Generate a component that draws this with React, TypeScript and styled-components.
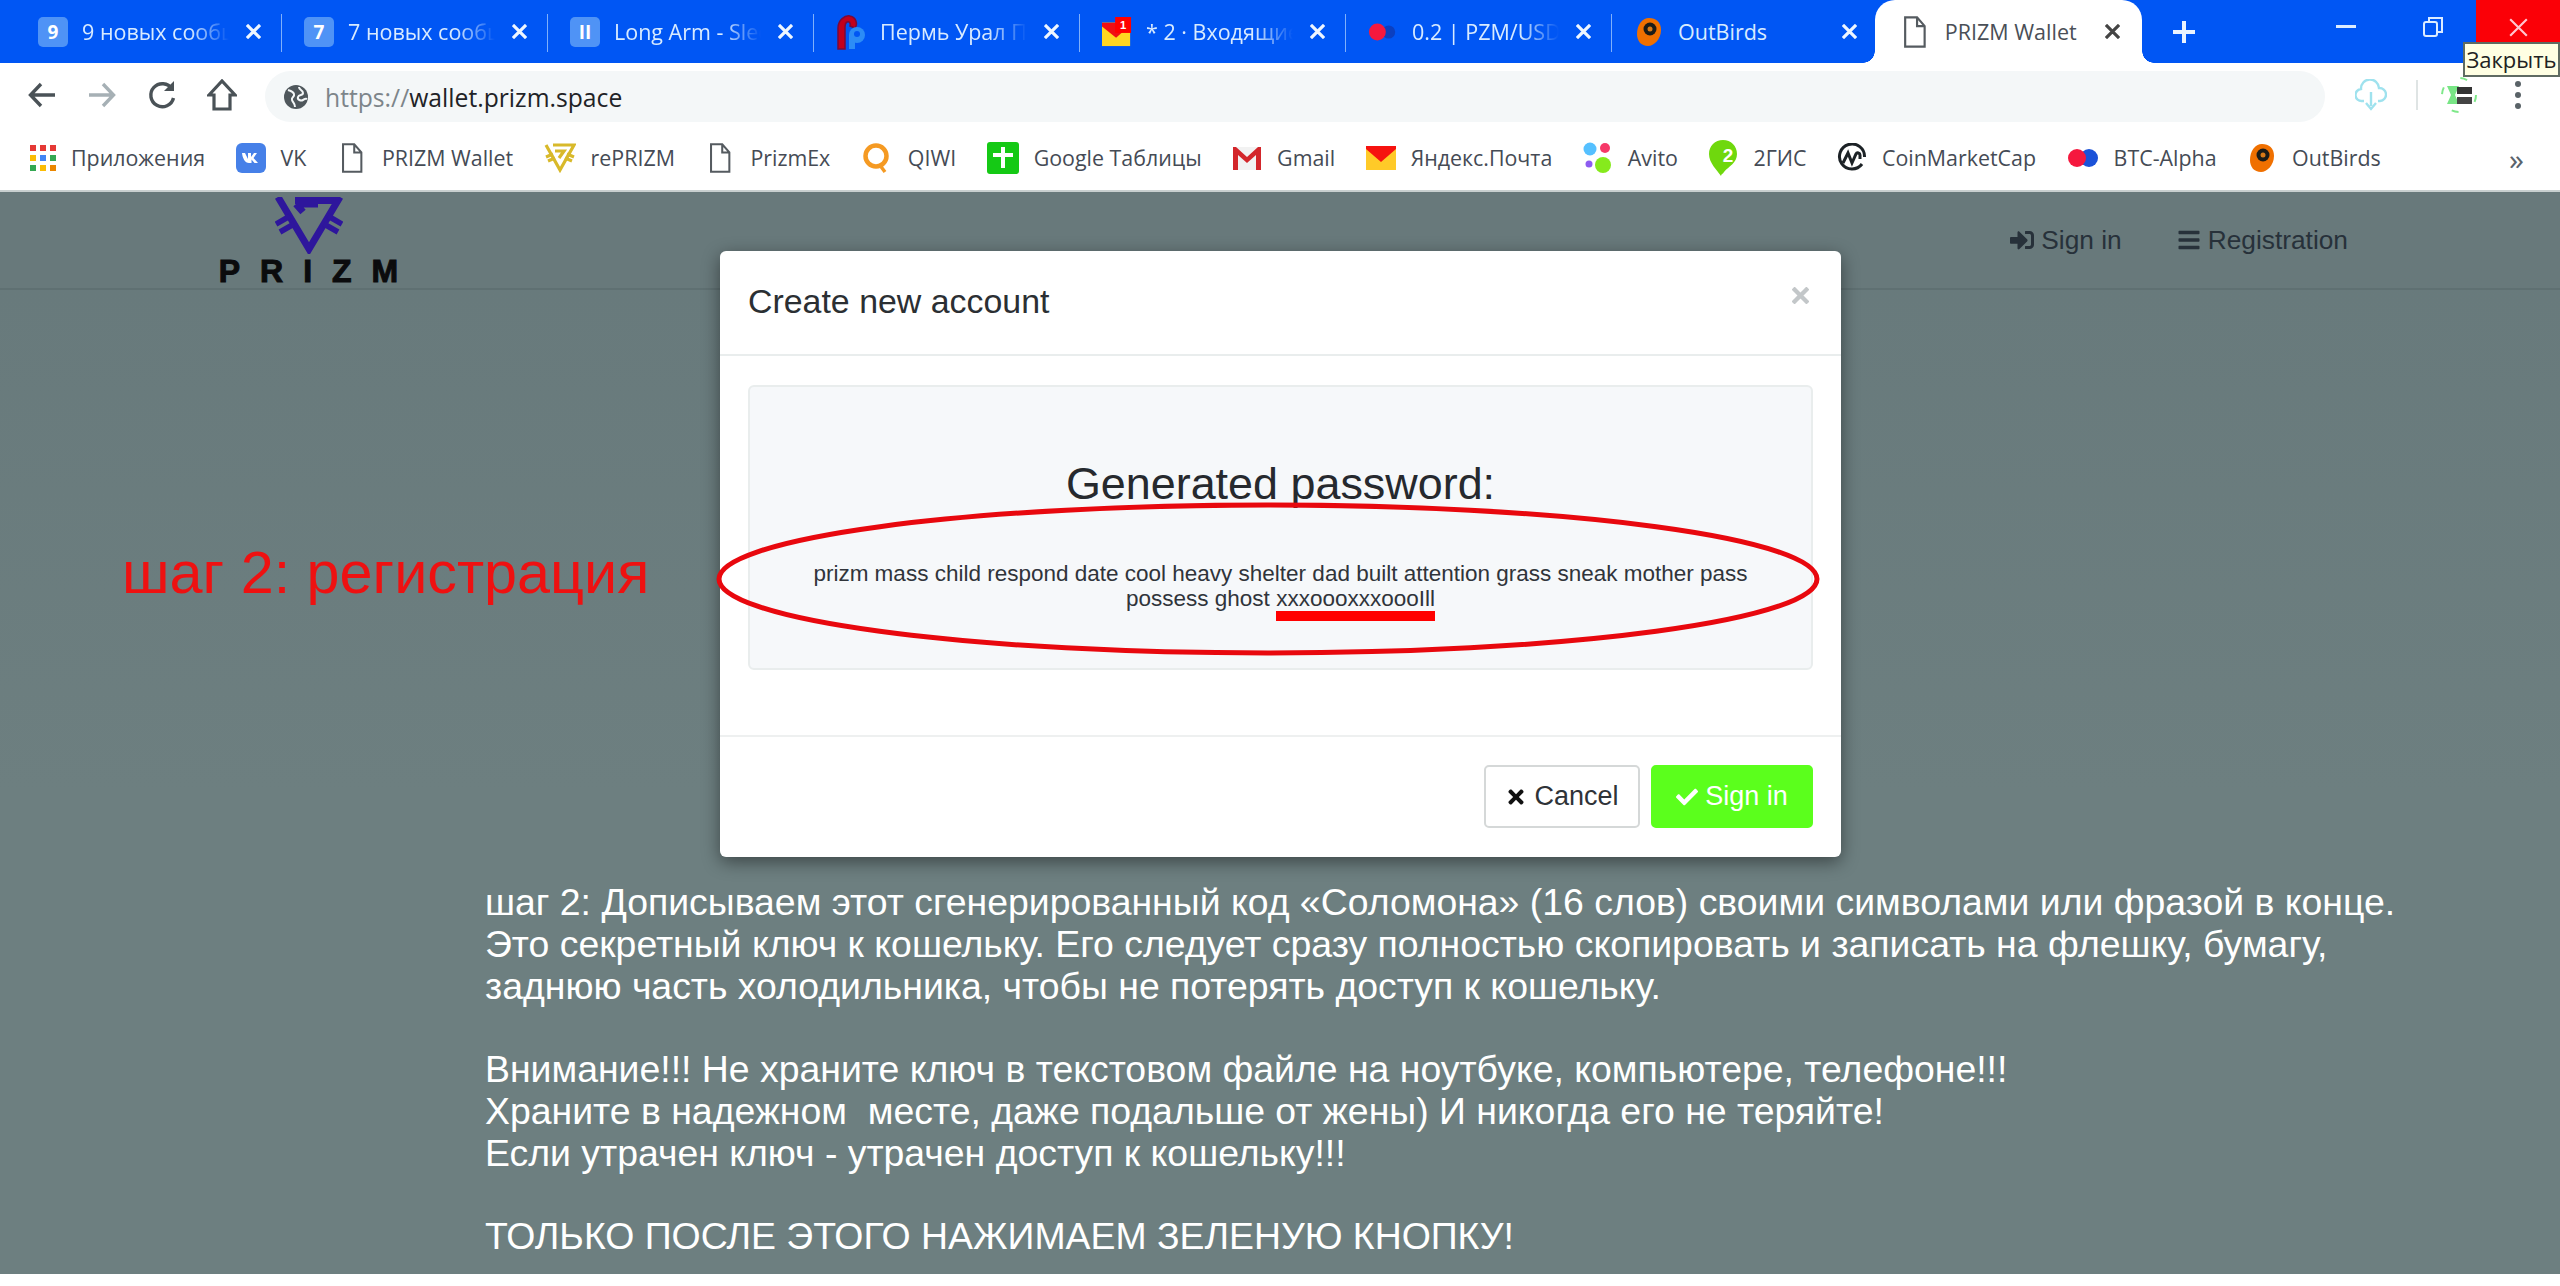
import React from "react";
import styled, { createGlobalStyle } from "styled-components";
import { FaBars, FaCheck, FaSignInAlt, FaTimes } from "react-icons/fa";

const Global = createGlobalStyle`
  html, body { margin: 0; padding: 0; background: #fff; }
  body { width: 2560px; height: 1286px; overflow: hidden; font-family: "Liberation Sans", Arial, sans-serif; }
`;

const CHROME_FONT = `"Open Sans", "Noto Sans", sans-serif`;

const TabStrip = styled.div`
  height: 63px; background: #0056f4; display: flex; align-items: stretch; padding-left: 16px;
  font-family: ${CHROME_FONT}; position: relative;
`;
const Tab = styled.div`
  width: 266px; display: flex; align-items: center; padding-left: 22px; box-sizing: border-box; position: relative;
  &::after { content: ""; position: absolute; right: 0; top: 14px; bottom: 11px; width: 1px; background: ${(p: { $last?: boolean }) => (p.$last ? "transparent" : "#7fb0fb")}; }
`;
const FavSlot = styled.div`
  width: 30px; height: 30px; display: flex; align-items: center; justify-content: center; flex: none;
`;
const CountBadge = styled.div`
  width: 30px; height: 30px; border-radius: 5px; background: #4f93f6; color: #fff; font: 700 19px ${CHROME_FONT};
  display: flex; align-items: center; justify-content: center;
`;
const TabTitle = styled.div`
  margin-left: 14px; width: 150px; flex: none; overflow: hidden; white-space: nowrap;
  font-size: 21.5px; line-height: 30px; color: #d8ebff;
  -webkit-mask-image: ${(p: { $plain?: boolean }) => (p.$plain ? "none" : "linear-gradient(90deg,#000 72%,transparent 98%)")};
`;
const TabClose = styled.div`
  flex: none; margin-left: 10px; width: 22px; height: 22px; color: #eef6ff;
  display: flex; align-items: center; justify-content: center;
`;
const ActiveTab = styled.div`
  margin-left: -3px; width: 267px; background: #fff; border-radius: 20px 20px 0 0; display: flex; align-items: center;
  padding-left: 28px; box-sizing: border-box; position: relative; color: #444;
  &::before, &::after { content: ""; position: absolute; bottom: 0; width: 12px; height: 12px; background: radial-gradient(circle at var(--cx) 0, #0056f4 11.5px, #fff 12px); }
  &::before { left: -12px; --cx: 0; }
  &::after { right: -12px; --cx: 100%; }
`;
const ActiveTitle = styled.div`
  margin-left: 18px; font-size: 21.5px; color: #4a4f57; white-space: nowrap; width: 160px;
`;
const NewTab = styled.div`
  margin-left: 27px; width: 30px; display: flex; align-items: center; justify-content: center; color: #eaf3ff;
`;
const WindowControls = styled.div`
  margin-left: auto; display: flex; align-items: flex-start; height: 42px; color: #dcecff;
`;
const WinBtn = styled.div<{ $w: number; $danger?: boolean }>`
  width: ${(p) => p.$w}px; height: 42px; display: flex; align-items: center; justify-content: center;
  box-sizing: border-box; padding-top: 12px;
  background: ${(p) => (p.$danger ? "#fb0007" : "transparent")};
  color: ${(p) => (p.$danger ? "#ffc6d0" : "inherit")};
`;
const Tooltip = styled.div`
  position: absolute; right: 0; top: 42px; width: 97px; height: 35px; box-sizing: border-box; z-index: 3;
  background: #ffffe3; border: 2px solid #5f6b62; color: #222; font: 22px/30px ${CHROME_FONT}; text-align: center; white-space: nowrap;
`;

const Toolbar = styled.div`
  height: 64px; background: #fff; display: flex; align-items: center; padding-left: 26px; box-sizing: border-box; font-family: ${CHROME_FONT};
`;
const NavIcon = styled.div`
  width: 32px; height: 32px; margin-right: 28px; display: flex; align-items: center; justify-content: center;
  color: ${(p: { $muted?: boolean }) => (p.$muted ? "#a6b0b5" : "#4a5257")}; flex: none;
`;
const UrlBar = styled.div`
  margin-left: -1px; width: 2060px; height: 51px; margin-top: 3px; border-radius: 26px; background: #f4f7f8; display: flex; align-items: center; padding-left: 19px; box-sizing: border-box; flex: none;
`;
const UrlText = styled.div`
  margin-left: 17px; font-size: 24.7px; color: #1f2327; padding-top: 2px;
  span { color: #7d858a; }
`;
const ToolRight = styled.div`
  display: flex; align-items: center; margin-left: 30px;
`;
const ToolDivider = styled.div`
  width: 2px; height: 30px; background: #dfe4e4; margin: 0 23px 0 29px;
`;
const Kebab = styled.div`
  margin-left: 38px; display: flex; flex-direction: column; gap: 5px;
  i { display: block; width: 6px; height: 6px; border-radius: 50%; background: #5a6368; }
`;

const Bookmarks = styled.div`
  height: 65px; background: #fff; display: flex; align-items: center; padding: 0 0 2px 30px; box-sizing: border-box; gap: 30.5px;
  font-family: ${CHROME_FONT}; border-bottom: 2px solid #c8cfcf; position: relative;
`;
const Bookmark = styled.div`
  display: flex; align-items: center; gap: 15px; font-size: 21.4px; color: #454b55; white-space: nowrap; flex: none; height: 34px;
`;
const DocSlot = styled.div`
  width: 30px; display: flex; justify-content: center; flex: none;
`;
const More = styled.div`
  position: absolute; left: 2509px; top: 11px; font-size: 30px; color: #59636b;
`;

const Page = styled.div`
  height: 1082px; background: #6d7f80; box-sizing: border-box; position: relative;
  background-image: linear-gradient(180deg, #67797b 0, #6d7f80 600px);
`;
const Navbar = styled.div`
  height: 98px; border-bottom: 2px solid #5f7072; box-sizing: border-box; background: #68797b; display: flex; align-items: flex-start; padding-left: 218px;
`;
const Logo = styled.div`
  width: 181px; display: flex; flex-direction: column; align-items: center; padding-top: 5px;
`;
const LogoWord = styled.div`
  margin-top: 2px; font: 900 32px/30px "Liberation Sans", sans-serif; letter-spacing: 20px; margin-right: -20px; color: #0b0b0d; -webkit-text-stroke: 1px #0b0b0d; white-space: nowrap;
`;
const NavLinks = styled.div`
  margin-left: auto; margin-right: 212px; display: flex; align-items: center; gap: 55px; height: 96px; color: #27313a; font-size: 26.3px;
`;
const NavLink = styled.div`
  display: flex; align-items: center; gap: 7px; white-space: nowrap; position: relative;
`;

const Stage = styled.div`
  display: flex; margin-top: -39px; padding-left: 122px; position: relative;
`;
const Annotation = styled.div`
  width: 598px; flex: none; padding-top: 282px; font-size: 59.3px; line-height: 80px; color: #ee1111; white-space: nowrap; box-sizing: border-box;
`;
const Modal = styled.div`
  width: 1121px; height: 606px; background: #fff; border-radius: 6px; box-shadow: 0 5px 18px rgba(0,0,0,.45); display: flex; flex-direction: column; position: relative; flex: none;
`;
const ModalHeader = styled.div`
  height: 105px; box-sizing: border-box; border-bottom: 2px solid #e9eded; display: flex; justify-content: space-between; padding: 0 28px; color: #2b2f33;
`;
const ModalTitle = styled.div`
  font-size: 33.9px; line-height: 100px;
`;
const ModalClose = styled.div`
  color: #c3c7c9; padding-top: 36px; margin-right: 4px;
`;
const ModalBody = styled.div`
  height: 379px; box-sizing: border-box; padding: 29px 28px 0;
`;
const Well = styled.div`
  height: 285px; box-sizing: border-box; background: #f6f8fa; border: 2px solid #e9eded; border-radius: 6px; text-align: center; color: #26292e; padding-top: 70px;
`;
const WellTitle = styled.div`
  font-size: 44.9px; line-height: 54px;
`;
const Password = styled.div`
  margin-top: 50px; font-size: 22.5px; line-height: 25px; padding: 0 60px; color: #30343a;
`;
const Suffix = styled.span`
  position: relative; white-space: nowrap;
  &::after { content: ""; position: absolute; left: 0; right: 0; top: 25px; height: 10px; background: #f00; }
`;
const Circle = styled.svg`
  position: absolute; left: -7px; top: 248px; pointer-events: none;
`;
const ModalFooter = styled.div`
  flex: 1; border-top: 2px solid #eef0f0; display: flex; justify-content: flex-end; gap: 11px; padding: 28px 28px 0; box-sizing: border-box;
`;
const Btn = styled.div`
  height: 63px; box-sizing: border-box; border-radius: 5px; font-size: 27px; display: flex; align-items: center; justify-content: center; gap: 7px;
  width: ${(p: { $primary?: boolean }) => (p.$primary ? "162px" : "156px")};
  background: ${(p: { $primary?: boolean }) => (p.$primary ? "#5bff1c" : "#fff")};
  color: ${(p: { $primary?: boolean }) => (p.$primary ? "#fff" : "#2f3338")};
  border: 2px solid ${(p: { $primary?: boolean }) => (p.$primary ? "#5bff1c" : "#d5d8d8")};
`;

const Notes = styled.div`
  margin-top: 25px; padding-left: 485px; font-size: 37.4px; line-height: 41.8px; color: #fff; white-space: pre;
`;
const Spacer = styled.div`
  height: 41.8px;
`;

const X = ({ s = 15, w = 3.4 }: { s?: number; w?: number }) => (
  <svg width={s} height={s} viewBox="0 0 16 16"><path d="M1 1 15 15M15 1 1 15" stroke="currentColor" strokeWidth={w} fill="none" /></svg>
);
const Doc = ({ s = 32 }: { s?: number }) => (
  <svg width={s * 0.7} height={s} viewBox="0 0 22 30"><path d="M2 1.5h11l7 8v19H2zM13 1.5v8h7" fill="#fff" stroke="#555b60" strokeWidth="2" /></svg>
);
const Perm = () => (
  <svg width="30" height="36" viewBox="0 0 30 36"><path d="M2 35V14C2 6 9 1 14 2c6 1 8 8 5 12l-5-2c1-3-1-5-3-4-2 1-2 3-2 6v21z" fill="#c3001c" stroke="#7a0a3a" strokeWidth="1.5" /><circle cx="21" cy="21" r="8" fill="#2c8cf6" /><rect x="13" y="21" width="6" height="14" fill="#2c8cf6" /><circle cx="21" cy="20" r="3" fill="#0056f4" /></svg>
);
const MailBadge = () => (
  <svg width="32" height="32" viewBox="0 0 32 32"><rect x="0" y="6" width="30" height="25" fill="#ffd621" /><path d="M0 6h22v10L15 22 0 10z" fill="#f00e14" /><rect x="14" y="0" width="17" height="17" fill="#f00" /><text x="22.5" y="13" fontSize="12" fontWeight="700" fill="#fff" textAnchor="middle" fontFamily="Liberation Sans">1</text></svg>
);
const BtcIcon = ({ dark = false }: { dark?: boolean }) => (
  <svg width="32" height="20" viewBox="0 0 32 20"><circle cx="22" cy="10" r={dark ? 7 : 9} fill={dark ? "#0b3fc0" : "#1b52d8"} /><circle cx="10" cy="10" r="9" fill="#f5183e" /></svg>
);
const OutBirdsIcon = ({ s = 30 }: { s?: number }) => (
  <svg width={s} height={s} viewBox="0 0 30 30"><path d="M15 1c7 0 12 4 12 12 0 9-7 16-13 16C7 29 3 24 3 17 3 8 8 1 15 1z" fill="#f07000" /><circle cx="16" cy="12" r="6.5" fill="#1c1c18" /><circle cx="16" cy="12" r="2.5" fill="#d87a18" /></svg>
);
const Apps = () => (
  <svg width="26" height="26" viewBox="0 0 26 26">
    {[["#e53935", "#e53935", "#e53935"], ["#fbbc05", "#4285f4", "#34a853"], ["#34a853", "#fbbc05", "#ea8600"]].map((row, y) =>
      row.map((c, x) => <rect key={`${x}${y}`} x={x * 10} y={y * 10} width="6" height="6" fill={c} />)
    )}
  </svg>
);
const VK = () => (
  <svg width="30" height="30" viewBox="0 0 30 30"><rect width="30" height="30" rx="6" fill="#4680e8" /><path d="M6 10h3l3 6v-6h3v4l3-4h3l-3.5 5L22 20h-3.5l-3-3.5V20H13C9 20 6.500 15 6 10z" fill="#fff" /></svg>
);
const RePrizm = () => (
  <svg width="32" height="30" viewBox="0 0 32 30" fill="none" stroke="#d8b92a" strokeWidth="3.2"><path d="M2 2 16 27 30 2H9" /><path d="M2 14l7-3M4 18l7-3M30 14l-7-3M28 18l-7-3" /><path d="M11 8l9 0-5 7" /></svg>
);
const Qiwi = () => (
  <svg width="32" height="32" viewBox="0 0 32 32" fill="none"><circle cx="15" cy="14" r="10.500" stroke="#f59a23" strokeWidth="4.500" /><path d="M18 22l6 8" stroke="#f59a23" strokeWidth="3.500" /></svg>
);
const Sheets = () => (
  <svg width="32" height="32" viewBox="0 0 32 32"><rect width="32" height="32" rx="3" fill="#15c915" /><path d="M6 11h20v4H18v11h-4V15H6zM14 5h4v6h-4z" fill="#fff" /></svg>
);
const Gmail = () => (
  <svg width="30" height="24" viewBox="0 0 30 24"><path d="M1 1h28v23H1z" fill="#f2f2f2" /><path d="M1 24V1h3l11 10L26 1h3v23h-5V9l-9 8-9-8v15z" fill="#d3262b" /></svg>
);
const Yandex = () => (
  <svg width="30" height="24" viewBox="0 0 30 24"><rect width="30" height="24" fill="#ffca28" /><path d="M0 0h30v3L15 16 0 3z" fill="#f6120f" /></svg>
);
const Avito = () => (
  <svg width="30" height="32" viewBox="0 0 30 32"><circle cx="7" cy="7" r="6.500" fill="#55c0ff" /><circle cx="22" cy="6" r="5" fill="#f63868" /><circle cx="6" cy="22" r="3.500" fill="#8d5cf0" /><circle cx="20" cy="23" r="8" fill="#86ea1c" /></svg>
);
const TwoGis = () => (
  <svg width="30" height="36" viewBox="0 0 30 36"><path d="M15 0C7 0 1 6 1 14c0 9 8 16 12 22 0-2 2-2 3-4 5-6 13-9 13-18C29 6 23 0 15 0z" fill="#6fd80d" /><text x="20" y="22" fontSize="19" fontWeight="700" fill="#fff" textAnchor="middle" fontFamily="Liberation Sans">2</text></svg>
);
const Cmc = () => (
  <svg width="30" height="30" viewBox="0 0 30 30" fill="none" stroke="#1c2226" strokeWidth="3"><path d="M25 21A12.500 12.500 0 1 1 27.500 14" /><path d="M6 20l5-10 4 10 4-9c1-2 4-1 4 1v4" /></svg>
);

const tabs = [
  { fav: <CountBadge>9</CountBadge>, title: "9 новых сообщений" },
  { fav: <CountBadge>7</CountBadge>, title: "7 новых сообщений" },
  { fav: <CountBadge>II</CountBadge>, title: "Long Arm - Sleep" },
  { fav: <Perm />, title: "Пермь Урал Пресс" },
  { fav: <MailBadge />, title: "* 2 · Входящие — Яндекс" },
  { fav: <BtcIcon dark />, title: "0.2 | PZM/USD — BTC" },
];

const marks = [
  { icon: <Apps />, label: "Приложения" },
  { icon: <VK />, label: "VK" },
  { icon: <DocSlot><Doc /></DocSlot>, label: "PRIZM Wallet" },
  { icon: <RePrizm />, label: "rePRIZM" },
  { icon: <DocSlot><Doc /></DocSlot>, label: "PrizmEx" },
  { icon: <Qiwi />, label: "QIWI" },
  { icon: <Sheets />, label: "Google Таблицы" },
  { icon: <Gmail />, label: "Gmail" },
  { icon: <Yandex />, label: "Яндекс.Почта" },
  { icon: <Avito />, label: "Avito" },
  { icon: <TwoGis />, label: "2ГИС" },
  { icon: <Cmc />, label: "CoinMarketCap" },
  { icon: <BtcIcon />, label: "BTC-Alpha" },
  { icon: <OutBirdsIcon />, label: "OutBirds" },
];

export default function App() {
  return (
    <>
      <Global />
      <TabStrip>
        {tabs.map((t) => (
          <Tab key={t.title}>
            <FavSlot>{t.fav}</FavSlot>
            <TabTitle>{t.title}</TabTitle>
            <TabClose><X /></TabClose>
          </Tab>
        ))}
        <Tab $last>
          <FavSlot><OutBirdsIcon /></FavSlot>
          <TabTitle $plain>OutBirds</TabTitle>
          <TabClose><X /></TabClose>
        </Tab>
        <ActiveTab>
          <Doc s={34} />
          <ActiveTitle>PRIZM Wallet</ActiveTitle>
          <X />
        </ActiveTab>
        <NewTab>
          <svg width="24" height="24" viewBox="0 0 24 24"><path d="M12 1v22M1 12h22" stroke="currentColor" strokeWidth="4" /></svg>
        </NewTab>
        <WindowControls>
          <WinBtn $w={87}><svg width="20" height="4" viewBox="0 0 20 4"><rect width="20" height="3" y="0" fill="currentColor" /></svg></WinBtn>
          <WinBtn $w={87}><svg width="20" height="22" viewBox="0 0 20 22" fill="none" stroke="currentColor" strokeWidth="2"><rect x="1" y="6" width="13" height="14" rx="2" /><path d="M6 6V2h13v14h-5" /></svg></WinBtn>
          <WinBtn $w={84} $danger><X s={19} w={1.8} /></WinBtn>
        </WindowControls>
        <Tooltip>Закрыть</Tooltip>
      </TabStrip>
      <Toolbar>
        <NavIcon><svg width="28" height="28" viewBox="0 0 28 28" fill="none" stroke="currentColor" strokeWidth="3.400"><path d="M27 14H3M13 3 2.500 14 13 25" /></svg></NavIcon>
        <NavIcon $muted><svg width="28" height="28" viewBox="0 0 28 28" fill="none" stroke="currentColor" strokeWidth="3.400"><path d="M1 14h24M15 3l10.500 11L15 25" /></svg></NavIcon>
        <NavIcon><svg width="28" height="30" viewBox="0 0 28 30" fill="none" stroke="currentColor" strokeWidth="3.400"><path d="M24 9A11.500 11.500 0 1 0 25.500 18" /><path d="M26 1v10H16z" fill="currentColor" stroke="none" /></svg></NavIcon>
        <NavIcon><svg width="30" height="32" viewBox="0 0 30 32" fill="none" stroke="currentColor" strokeWidth="3.200"><path d="M2 16 15 2l13 14h-5v14H7V16z" /></svg></NavIcon>
        <UrlBar>
          <svg width="24" height="24" viewBox="0 0 24 24"><circle cx="12" cy="12" r="12" fill="#4f575c" /><path d="M4 5c3 1 5 1 6 4s-3 3-2 6 3 3 3 7M15 2c0 3 4 3 4 6s-4 1-5 4 3 4 5 3 2-2 4-1" stroke="#f4f7f8" strokeWidth="2" fill="none" /></svg>
          <UrlText><span>https://</span>wallet.prizm.space</UrlText>
        </UrlBar>
        <ToolRight>
          <svg width="32" height="32" viewBox="0 0 32 32" fill="none" stroke="#9fe2ee" strokeWidth="2.400"><path d="M9 22H7a6 6 0 0 1-1-12 9 9 0 0 1 18-1 6.500 6.500 0 0 1 1 13h-2" /><path d="M16 13v14M11 24l5 6 5-6" /></svg>
          <ToolDivider />
          <svg width="36" height="36" viewBox="0 0 36 36"><circle cx="18" cy="18" r="17" fill="none" stroke="#7fe88a" strokeWidth="2" strokeDasharray="7 20" /><path d="M6 9h12l-4 9 4 9H6l4-9z" fill="#78e585" /><rect x="16" y="10" width="15" height="7" fill="#333" /><rect x="16" y="20" width="15" height="7" fill="#444" /></svg>
          <Kebab><i /><i /><i /></Kebab>
        </ToolRight>
      </Toolbar>
      <Bookmarks>
        {marks.map((m) => (
          <Bookmark key={m.label}>{m.icon}{m.label}</Bookmark>
        ))}
        <More>»</More>
      </Bookmarks>
      <Page>
        <Navbar>
          <Logo>
            <svg width="68" height="57" viewBox="0 0 68 57" fill="none" stroke="#2e169c" strokeWidth="7">
              <path d="M3 0 34 52 65 0" strokeLinejoin="miter" />
              <path d="M20 3.500h44M21 7l7 8M21 7h22" />
              <path d="M1 27 15 19M5 35 19 27M67 27 53 19M63 35 49 27" strokeWidth="5.500" />
            </svg>
            <LogoWord>PRIZM</LogoWord>
          </Logo>
          <NavLinks>
            <NavLink><FaSignInAlt size={24} />Sign in</NavLink>
            <NavLink><FaBars size={24} />Registration</NavLink>
          </NavLinks>
        </Navbar>
        <Stage>
          <Annotation>шаг 2: регистрация</Annotation>
          <Modal>
            <ModalHeader>
              <ModalTitle>Create new account</ModalTitle>
              <ModalClose><X s={17} w={4} /></ModalClose>
            </ModalHeader>
            <ModalBody>
              <Well>
                <WellTitle>Generated password:</WellTitle>
                <Password>
                  prizm mass child respond date cool heavy shelter dad built attention grass sneak mother pass possess ghost <Suffix>xxxoooxxxoooIll</Suffix>
                </Password>
              </Well>
            </ModalBody>
            <ModalFooter>
              <Btn><FaTimes size={22} color="#111" />Cancel</Btn>
              <Btn $primary><FaCheck size={22} />Sign in</Btn>
            </ModalFooter>
            <Circle width="1110" height="160" viewBox="0 0 1110 160">
              <ellipse cx="555" cy="80" rx="549" ry="74" fill="none" stroke="#e8080e" strokeWidth="5" />
            </Circle>
          </Modal>
        </Stage>
        <Notes>
          <div>шаг 2: Дописываем этот сгенерированный код «Соломона» (16 слов) своими символами или фразой в конце.</div>
          <div>Это секретный ключ к кошельку. Его следует сразу полностью скопировать и записать на флешку, бумагу,</div>
          <div>заднюю часть холодильника, чтобы не потерять доступ к кошельку.</div>
          <Spacer />
          <div>Внимание!!! Не храните ключ в текстовом файле на ноутбуке, компьютере, телефоне!!!</div>
          <div>Храните в надежном  месте, даже подальше от жены) И никогда его не теряйте!</div>
          <div>Если утрачен ключ - утрачен доступ к кошельку!!!</div>
          <Spacer />
          <div>ТОЛЬКО ПОСЛЕ ЭТОГО НАЖИМАЕМ ЗЕЛЕНУЮ КНОПКУ!</div>
        </Notes>
      </Page>
    </>
  );
}
